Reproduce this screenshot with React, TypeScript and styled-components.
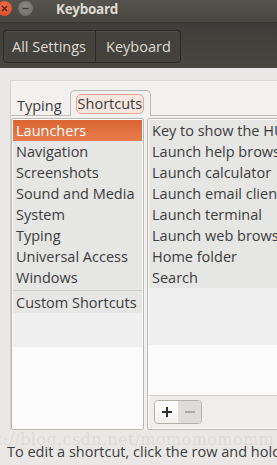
import React from "react";
import styled, { createGlobalStyle } from "styled-components";

const GlobalStyle = createGlobalStyle`
  html, body { margin: 0; padding: 0; background: #f2f1f0; }
  body { font-family: "Open Sans", "Noto Sans", sans-serif; }
  * { box-sizing: border-box; }
`;

const Window = styled.div`
  width: 277px;
  height: 465px;
  overflow: hidden;
  display: flex;
  flex-direction: column;
  background: #f2f1f0;
`;

const TitleBar = styled.div`
  height: 22px;
  flex: none;
  display: flex;
  align-items: flex-start;
  padding-top: 1px;
  gap: 6px;
  background: linear-gradient(#56544d, #46453f);
`;

const WinButton = styled.div<{ $kind: "close" | "min" }>`
  width: 15px;
  height: 15px;
  border-radius: 50%;
  margin-left: ${(p) => (p.$kind === "close" ? "-3px" : "0")};
  background: ${(p) =>
    p.$kind === "close"
      ? "radial-gradient(circle at 50% 35%, #f26d4a, #d8451f)"
      : "radial-gradient(circle at 50% 35%, #8a8882, #6b6964)"};
  display: flex;
  align-items: center;
  justify-content: center;
`;

const Title = styled.div`
  margin-left: 17px;
  color: #dfdbd2;
  font-weight: 700;
  font-size: 13.5px;
  line-height: 16px;
  letter-spacing: -0.3px;
`;

const Toolbar = styled.div`
  height: 46px;
  flex: none;
  display: flex;
  align-items: center;
  padding-left: 3px;
  padding-top: 2px;
  border-top: 1px solid #37362f;
  background: linear-gradient(#3e3d39, #47463f);
`;

const ButtonGroup = styled.div`
  display: flex;
  height: 33px;
  border: 1px solid #2b2a27;
  border-radius: 4px;
  box-shadow: inset 0 1px 0 rgba(255, 255, 255, 0.06);
  background: #43423d;
`;

const ToolButton = styled.div<{ $first?: boolean }>`
  display: flex;
  align-items: center;
  padding: ${(p) => (p.$first ? "0 9px 0 8px" : "0 9px 0 10px")};
  color: #dfdbd2;
  font-size: 14.5px;
  border-left: ${(p) => (p.$first ? "none" : "1px solid #2b2a27")};
`;

const Content = styled.div`
  flex: 1;
  display: flex;
  flex-direction: column;
  background: #e9e8e6;
  padding-top: 12px;
`;

const Frame = styled.div`
  flex: 1;
  margin-left: 10px;
  border-left: 1px solid #d2d0cc;
  border-top: 1px solid #d8d6d2;
  background: #f2f1f0;
  display: flex;
  flex-direction: column;
  padding-top: 9px;
`;

const TabRow = styled.div`
  display: flex;
  align-items: flex-end;
  height: 26px;
  border-bottom: 1px solid #bdbab5;
  padding-left: 2px;
  gap: 4px;
`;

const Tab = styled.div<{ $active?: boolean }>`
  height: ${(p) => (p.$active ? "26px" : "22px")};
  padding: ${(p) => (p.$active ? "3px 6px 3px 5px" : "0 4px")};
  display: flex;
  align-items: center;
  font-size: 14.5px;
  color: #3c3c3c;
  margin-bottom: -1px;
  background: ${(p) => (p.$active ? "#f2f1f0" : "transparent")};
  border: ${(p) => (p.$active ? "1px solid #bdbab5" : "none")};
  border-bottom: none;
  border-radius: 5px 5px 0 0;
`;

const FocusRing = styled.div`
  border: 1px solid #eba491;
  background: #f6e6e0;
  border-radius: 5px;
  padding: 0 1px;
  height: 20px;
  display: flex;
  align-items: center;
`;

const Panel = styled.div`
  display: flex;
  gap: 3px;
  padding-top: 2px;
  height: 314px;
`;

const ListBox = styled.div<{ $width: number }>`
  width: ${(p) => p.$width}px;
  flex: none;
  border: 1px solid #bcb9b3;
  border-radius: 2px;
  display: flex;
  flex-direction: column;
  padding: 1px;
  background: #fbfbfb;
`;

const Row = styled.div<{ $selected?: boolean }>`
  height: 21px;
  flex: none;
  display: flex;
  align-items: center;
  padding-left: 3px;
  white-space: nowrap;
  font-size: 14.5px;
  color: ${(p) => (p.$selected ? "#ffffff" : "#3c3c3c")};
  background: ${(p) =>
    p.$selected ? "linear-gradient(#db6533, #e87b4b)" : "#e6e6e5"};
`;

const Separator = styled.div`
  height: 4px;
  flex: none;
  background: #e6e6e5;
  display: flex;
  align-items: center;
  &::after {
    content: "";
    flex: 1;
    height: 1px;
    background: #cfcdca;
  }
`;

const Filler = styled.div<{ $grey: number }>`
  flex: 1;
  background: linear-gradient(
    #efefef 0,
    #efefef ${(p) => p.$grey}px,
    #fbfbfb ${(p) => p.$grey}px
  );
`;

const ListFooter = styled.div`
  height: 33px;
  flex: none;
  border-top: 1px solid #d4d2ce;
  background: #efeeed;
  display: flex;
  align-items: center;
  padding-left: 5px;
`;

const PlusMinus = styled.div`
  display: flex;
  height: 24px;
  border: 1px solid #b3b0aa;
  border-radius: 4px;
  overflow: hidden;
`;

const PMButton = styled.div<{ $disabled?: boolean }>`
  width: 23px;
  display: flex;
  align-items: center;
  justify-content: center;
  background: ${(p) =>
    p.$disabled ? "#dedddb" : "linear-gradient(#ffffff, #f1f0ef)"};
`;

const Footer = styled.div`
  flex: none;
  height: 35px;
  padding-top: 12px;
  padding-left: 7px;
  white-space: nowrap;
  font-size: 14.5px;
  line-height: 20px;
  color: #3c3c3c;
  position: relative;
`;

const Watermark = styled.div`
  position: absolute;
  left: -4px;
  top: 0px;
  font-family: "DejaVu Serif", serif;
  font-size: 16px;
  letter-spacing: 0.4px;
  line-height: 20px;
  color: rgba(140, 140, 140, 0.16);
  white-space: nowrap;
  pointer-events: none;
`;

const categories = [
  "Launchers",
  "Navigation",
  "Screenshots",
  "Sound and Media",
  "System",
  "Typing",
  "Universal Access",
  "Windows",
];

const shortcuts = [
  "Key to show the HUD",
  "Launch help browser",
  "Launch calculator",
  "Launch email client",
  "Launch terminal",
  "Launch web browser",
  "Home folder",
  "Search",
];

export default function App() {
  return (
    <>
      <GlobalStyle />
      <Window>
        <TitleBar>
          <WinButton $kind="close">
            <svg width="7" height="7" viewBox="0 0 7 7">
              <path d="M1 1L6 6M6 1L1 6" stroke="#4a2018" strokeWidth="1.4" />
            </svg>
          </WinButton>
          <WinButton $kind="min">
            <svg width="7" height="7" viewBox="0 0 7 7">
              <path d="M0.5 3.5H6.5" stroke="#3a3935" strokeWidth="1.4" />
            </svg>
          </WinButton>
          <Title>Keyboard</Title>
        </TitleBar>
        <Toolbar>
          <ButtonGroup>
            <ToolButton $first>All Settings</ToolButton>
            <ToolButton>Keyboard</ToolButton>
          </ButtonGroup>
        </Toolbar>
        <Content>
          <Frame>
            <TabRow>
              <Tab>Typing</Tab>
              <Tab $active>
                <FocusRing>Shortcuts</FocusRing>
              </Tab>
            </TabRow>
            <Panel>
              <ListBox $width={133}>
                {categories.map((c, i) => (
                  <Row key={c} $selected={i === 0}>
                    {c}
                  </Row>
                ))}
                <Separator />
                <Row>Custom Shortcuts</Row>
                <Filler $grey={34} />
              </ListBox>
              <ListBox $width={200}>
                {shortcuts.map((s) => (
                  <Row key={s}>{s}</Row>
                ))}
                <Filler $grey={57} />
                <ListFooter>
                  <PlusMinus>
                    <PMButton>
                      <svg width="12" height="12" viewBox="0 0 12 12">
                        <path d="M6 1V11M1 6H11" stroke="#2e2e2e" strokeWidth="2" />
                      </svg>
                    </PMButton>
                    <PMButton $disabled>
                      <svg width="12" height="12" viewBox="0 0 12 12">
                        <path d="M1 6H11" stroke="#a9a8a5" strokeWidth="2" />
                      </svg>
                    </PMButton>
                  </PlusMinus>
                </ListFooter>
              </ListBox>
            </Panel>
          </Frame>
          <Footer>
            <Watermark>t://blog.csdn.net/momomomomm</Watermark>
            To edit a shortcut, click the row and hold down the new keys or
            press Backspace to clear.
          </Footer>
        </Content>
      </Window>
    </>
  );
}
